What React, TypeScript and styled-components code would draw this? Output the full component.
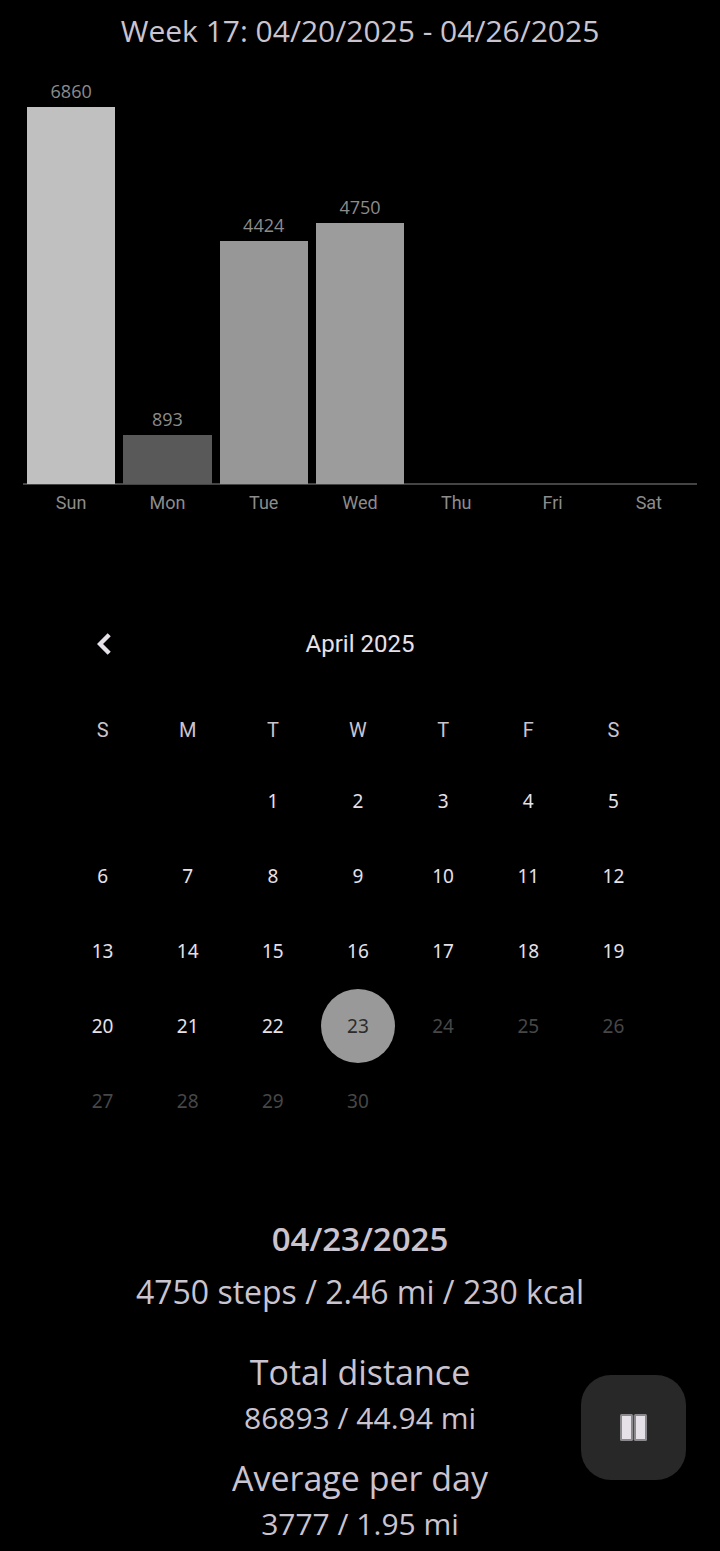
import React from "react";
import styled, { createGlobalStyle } from "styled-components";

const GlobalStyle = createGlobalStyle`
  *, *::before, *::after { box-sizing: border-box; }
  body {
    margin: 0;
    background: #000;
    color: #cac4d0;
    font-family: "Open Sans", "Noto Sans", sans-serif;
  }
`;

const Page = styled.main`
  display: flex;
  flex-direction: column;
  padding: 10px 0 4px;
`;

const WeekTitle = styled.h1`
  margin: 0;
  font-size: 30px;
  line-height: 42px;
  font-weight: 400;
  text-align: center;
`;

const Chart = styled.section`
  margin: 25px 23px 0;
`;

const Bars = styled.div`
  display: flex;
  align-items: flex-end;
  height: 408px;
  border-bottom: 2px solid #444;
`;

const BarColumn = styled.div`
  flex: 1;
  display: flex;
  flex-direction: column;
  align-items: center;
  margin-bottom: -1px;
  padding: 0 4px;
`;

const BarValue = styled.span`
  color: #8c8c8c;
  font-size: 18px;
  font-weight: 400;
  line-height: 32px;
`;

const Bar = styled.div<{ $tone: string }>`
  width: 100%;
  background: ${(p) => p.$tone};
`;

const DayLabels = styled.div`
  display: flex;
`;

const DayLabel = styled.span`
  flex: 1;
  color: #8c8c8c;
  font-family: Roboto, sans-serif;
  font-size: 18px;
  font-weight: 400;
  line-height: 36px;
  text-align: center;
`;

const Calendar = styled.section`
  margin-top: 93px;
  color: #e6e0e9;
  font-family: Roboto, sans-serif;
`;

const MonthBar = styled.div`
  display: grid;
  grid-template-columns: 60px 1fr 60px;
  align-items: center;
  height: 60px;
  padding: 0 74px;
`;

const MonthTitle = styled.h2`
  margin: 0;
  font-size: 24px;
  line-height: 32px;
  font-weight: 400;
  text-align: center;
`;

const PreviousButton = styled.button`
  display: flex;
  align-items: center;
  justify-content: center;
  width: 60px;
  height: 60px;
  padding: 0;
  border: 0;
  background: none;
  color: inherit;
`;

const MonthFrame = styled.div`
  padding: 23px 64px 0 60px;
`;

const MonthTable = styled.table`
  width: 100%;
  table-layout: fixed;
  border-collapse: collapse;
`;

const Weekday = styled.th`
  height: 66px;
  padding: 0;
  color: #cac4d0;
  font-size: 20px;
  font-weight: 400;
  text-align: center;
`;

const DayCell = styled.td`
  height: 75px;
  padding: 0;
`;

const DayButton = styled.button<{ $selected: boolean }>`
  display: block;
  width: 74px;
  height: 74px;
  margin: 0 auto;
  padding: 0;
  border: 0;
  border-radius: 50%;
  background: ${(p) => (p.$selected ? "#999" : "none")};
  color: ${(p) => (p.$selected ? "#2b2b2b" : "#e6e0e9")};
  font-family: "Noto Sans", sans-serif;
  font-size: 19px;
  line-height: 74px;

  &:disabled { color: #474747; }
`;

const Summary = styled.section`
  margin-top: 78px;
  text-align: center;
`;

const SummaryDate = styled.h2`
  margin: 0;
  font-size: 33px;
  line-height: 46px;
  font-weight: 600;
`;

const SummaryLine = styled.p`
  margin: 8px 0 34px;
  font-size: 32px;
  line-height: 44px;
`;

const StatTitle = styled.h3`
  margin: 14px 0 0;
  font-size: 34px;
  line-height: 48px;
  font-weight: 400;
`;

const StatValue = styled.p`
  margin: 0;
  font-size: 30px;
  line-height: 44px;
`;

const PauseButton = styled.button`
  position: fixed;
  right: 34px;
  bottom: 71px;
  display: flex;
  align-items: center;
  justify-content: center;
  width: 105px;
  height: 105px;
  padding: 0;
  border: 0;
  border-radius: 30px;
  background: #282828;
`;

const week = [
  { day: "Sun", steps: 6860, tone: "#c0c0c0" },
  { day: "Mon", steps: 893, tone: "#595959" },
  { day: "Tue", steps: 4424, tone: "#979797" },
  { day: "Wed", steps: 4750, tone: "#9c9c9c" },
  { day: "Thu", steps: 0, tone: "" },
  { day: "Fri", steps: 0, tone: "" },
  { day: "Sat", steps: 0, tone: "" },
];

const tallest = 377;
const mostSteps = Math.max(...week.map((d) => d.steps));

const weekdays = [
  ["S", "Sunday"],
  ["M", "Monday"],
  ["T", "Tuesday"],
  ["W", "Wednesday"],
  ["T", "Thursday"],
  ["F", "Friday"],
  ["S", "Saturday"],
];
const firstWeekday = 2;
const daysInMonth = 30;
const today = 23;

const weeks = Array.from({ length: 5 }, (_, row) =>
  Array.from({ length: 7 }, (_, col) => {
    const day = row * 7 + col - firstWeekday + 1;
    return day >= 1 && day <= daysInMonth ? day : null;
  })
);

export default function App() {
  return (
    <>
      <GlobalStyle />
      <Page>
        <WeekTitle>Week 17: 04/20/2025 - 04/26/2025</WeekTitle>
        <Chart aria-label="Steps per day">
          <Bars>
            {week.map((d) => (
              <BarColumn key={d.day}>
                {d.steps > 0 && (
                  <>
                    <BarValue>{d.steps}</BarValue>
                    <Bar
                      $tone={d.tone}
                      style={{ height: Math.round((d.steps / mostSteps) * tallest) }}
                    />
                  </>
                )}
              </BarColumn>
            ))}
          </Bars>
          <DayLabels>
            {week.map((d) => (
              <DayLabel key={d.day}>{d.day}</DayLabel>
            ))}
          </DayLabels>
        </Chart>

        <Calendar>
          <MonthBar>
            <PreviousButton type="button" aria-label="Previous month">
              <svg width="14" height="22" viewBox="0 0 14 22" aria-hidden="true">
                <path d="M12.2 1.8 3 11l9.2 9.2" fill="none" stroke="currentColor" strokeWidth="4.4" />
              </svg>
            </PreviousButton>
            <MonthTitle>April 2025</MonthTitle>
          </MonthBar>
          <MonthFrame>
            <MonthTable>
              <thead>
                <tr>
                  {weekdays.map(([letter, name]) => (
                    <Weekday key={name} scope="col" abbr={name}>
                      {letter}
                    </Weekday>
                  ))}
                </tr>
              </thead>
              <tbody>
                {weeks.map((days, row) => (
                  <tr key={row}>
                    {days.map((day, col) => (
                      <DayCell key={col}>
                        {day && (
                          <DayButton type="button" $selected={day === today} disabled={day > today}>
                            {day}
                          </DayButton>
                        )}
                      </DayCell>
                    ))}
                  </tr>
                ))}
              </tbody>
            </MonthTable>
          </MonthFrame>
        </Calendar>

        <Summary>
          <SummaryDate>04/23/2025</SummaryDate>
          <SummaryLine>4750 steps / 2.46 mi / 230 kcal</SummaryLine>
          <StatTitle>Total distance</StatTitle>
          <StatValue>86893 / 44.94 mi</StatValue>
          <StatTitle>Average per day</StatTitle>
          <StatValue>3777 / 1.95 mi</StatValue>
        </Summary>
      </Page>
      <PauseButton type="button" aria-label="Pause">
        <svg width="27" height="27" viewBox="0 0 27 27" aria-hidden="true">
          <rect x="0" y="0" width="13" height="27" rx="1.5" fill="#8b898c" />
          <rect x="14" y="0" width="13" height="27" rx="1.5" fill="#8b898c" />
          <rect x="13" y="1" width="1" height="25" fill="#4a4a4a" />
          <rect x="2" y="2" width="9" height="23" fill="#e6e0e9" />
          <rect x="16" y="2" width="9" height="23" fill="#e6e0e9" />
        </svg>
      </PauseButton>
    </>
  );
}
